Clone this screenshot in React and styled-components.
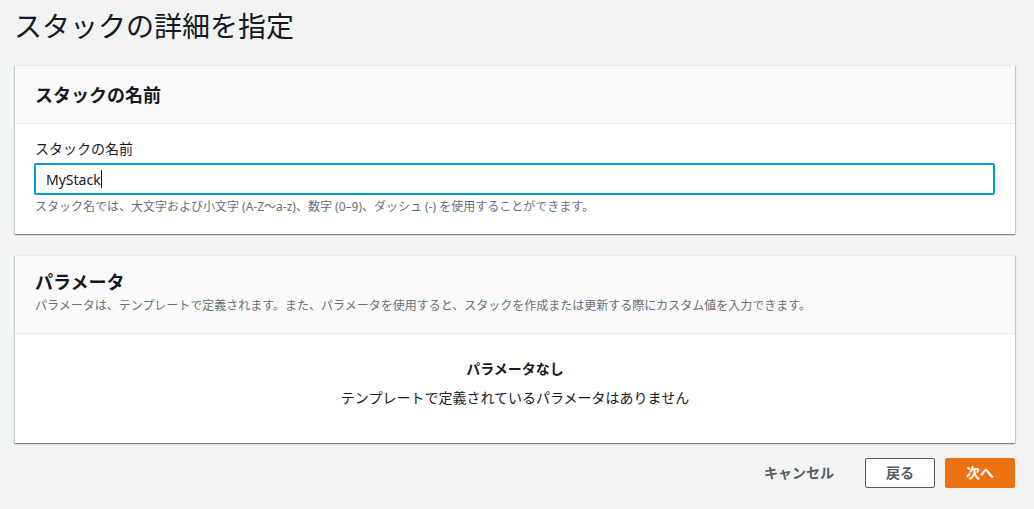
import React from 'react'
import styled, { createGlobalStyle } from 'styled-components'

const GlobalStyle = createGlobalStyle`
    html, body {
        margin: 0;
        padding: 0;
        background: #f2f3f3;
    }
    body {
        font-family: 'Noto Sans', 'Noto Sans CJK JP', sans-serif;
        color: #16191f;
    }
`

const Page = styled.div`
    width: 1000px;
    padding: 8px 19px 20px 15px;
`
const Title = styled.h1`
    margin: 0 0 21px -1px;
    font-size: 28px;
    line-height: 36px;
    font-weight: 400;
    color: #16191f;
`
const Card = styled.section`
    background: #fff;
    border-top: 1px solid #eaeded;
    box-shadow: 0 1px 1px 0 rgba(0, 28, 36, 0.3), 1px 1px 1px 0 rgba(0, 28, 36, 0.15), -1px 1px 1px 0 rgba(0, 28, 36, 0.15);
    margin-bottom: 21px;
`
const CardHeader = styled.div`
    background: #fafafa;
    border-bottom: 1px solid #eaeded;
    padding: ${p => p.$desc ? '15px 20px 19px' : '18px 20px 17px'};
`
const CardTitle = styled.h2`
    margin: 0;
    font-size: 18px;
    line-height: 22px;
    font-weight: 700;
`
const CardDesc = styled.p`
    margin: 5px 0 0;
    font-size: 12px;
    line-height: 16px;
    color: #687078;
`
const CardBody = styled.div`
    padding: 15px 20px 19px;
`
const Label = styled.label`
    display: block;
    font-size: 14px;
    line-height: 20px;
    margin-bottom: 4px;
`
const Input = styled.div`
    box-sizing: border-box;
    height: 32px;
    margin-left: -1px;
    border: 2px solid #00a1c9;
    border-radius: 2px;
    padding: 0 10px;
    display: flex;
    align-items: center;
    font-size: 14px;
    color: #16191f;
`
const Caret = styled.span`
    display: inline-block;
    width: 1px;
    height: 18px;
    background: #16191f;
`
const Hint = styled.p`
    margin: 4px 0 0;
    font-size: 12px;
    line-height: 16px;
    color: #687078;
`
const Empty = styled.div`
    text-align: center;
    padding: 25px 0 35px;
`
const EmptyTitle = styled.p`
    margin: 0;
    font-size: 14px;
    line-height: 20px;
    font-weight: 700;
`
const EmptyText = styled.p`
    margin: 9px 0 0;
    font-size: 14px;
    line-height: 20px;
`
const Actions = styled.div`
    display: flex;
    justify-content: flex-end;
    gap: 10px;
    margin-top: -6px;
`
const Button = styled.button`
    box-sizing: border-box;
    height: 30px;
    padding: 0 20px;
    font-family: inherit;
    font-size: 14px;
    font-weight: 700;
    line-height: 20px;
    border-radius: 2px;
    cursor: pointer;
    color: ${p => p.$primary ? '#fff' : '#545b64'};
    background: ${p => p.$primary ? '#ec7211' : p.$link ? 'transparent' : '#fff'};
    border: 1px solid ${p => p.$primary ? '#ec7211' : p.$link ? 'transparent' : '#545b64'};
`

export default function App() {
  return (
    <>
      <GlobalStyle />
      <Page>
        <Title>スタックの詳細を指定</Title>
        <Card>
          <CardHeader>
            <CardTitle>スタックの名前</CardTitle>
          </CardHeader>
          <CardBody>
            <Label>スタックの名前</Label>
            <Input>MyStack<Caret /></Input>
            <Hint>スタック名では、大文字および小文字 (A-Z〜a-z)、数字 (0–9)、ダッシュ (-) を使用することができます。</Hint>
          </CardBody>
        </Card>
        <Card>
          <CardHeader $desc>
            <CardTitle>パラメータ</CardTitle>
            <CardDesc>パラメータは、テンプレートで定義されます。また、パラメータを使用すると、スタックを作成または更新する際にカスタム値を入力できます。</CardDesc>
          </CardHeader>
          <Empty>
            <EmptyTitle>パラメータなし</EmptyTitle>
            <EmptyText>テンプレートで定義されているパラメータはありません</EmptyText>
          </Empty>
        </Card>
        <Actions>
          <Button $link>キャンセル</Button>
          <Button>戻る</Button>
          <Button $primary>次へ</Button>
        </Actions>
      </Page>
    </>
  )
}
